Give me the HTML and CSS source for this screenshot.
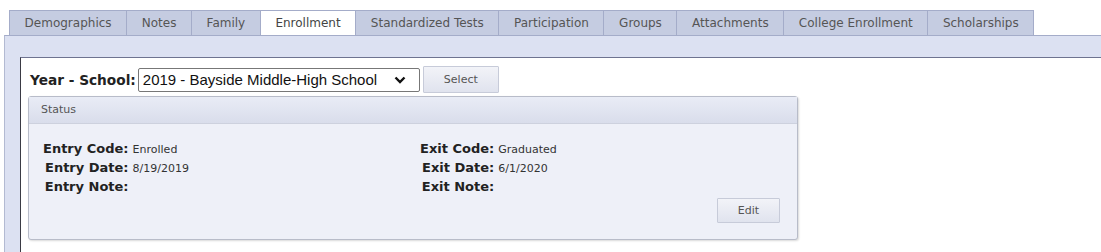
FILE: index.html
```html
<!DOCTYPE html>
<html>
<head>
    <meta charset="UTF-8">
    <meta name="viewport" content="width=device-width, initial-scale=1.0">
    <title>Enrollment</title>
    <link rel="stylesheet" href="styles.css">
</head>
<body>
    <ul class="tabs">
        <li>Demographics</li>
        <li>Notes</li>
        <li>Family</li>
        <li class="active">Enrollment</li>
        <li>Standardized Tests</li>
        <li>Participation</li>
        <li>Groups</li>
        <li>Attachments</li>
        <li>College Enrollment</li>
        <li>Scholarships</li>
    </ul>

    <div class="frame">
        <div class="content">
            <div class="school-row">
                <label for="school">Year - School:</label>
                <span class="select-wrap">
                    <select id="school">
                        <option>2019 - Bayside Middle-High School</option>
                    </select>
                    <svg class="chevron" width="12" height="8" viewBox="0 0 12 8">
                        <path d="M1.5 1.5 L6 6 L10.5 1.5" fill="none" stroke="#111" stroke-width="2.4"/>
                    </svg>
                </span>
                <button class="btn btn-select">Select</button>
            </div>

            <div class="panel">
                <div class="panel-head">Status</div>
                <div class="panel-body">
                    <div class="columns">
                        <div class="fields entry">
                            <span class="lbl">Entry Code:</span><span class="val">Enrolled</span>
                            <span class="lbl">Entry Date:</span><span class="val">8/19/2019</span>
                            <span class="lbl">Entry Note:</span><span class="val"></span>
                        </div>
                        <div class="fields">
                            <span class="lbl">Exit Code:</span><span class="val">Graduated</span>
                            <span class="lbl">Exit Date:</span><span class="val">6/1/2020</span>
                            <span class="lbl">Exit Note:</span><span class="val"></span>
                        </div>
                    </div>
                    <div class="panel-foot">
                        <button class="btn btn-edit">Edit</button>
                    </div>
                </div>
            </div>
        </div>
    </div>
</body>
</html>
```

FILE: styles.css
```css
html, body {
    height: 100%;
}
body {
    margin: 0;
    background: #fff;
    font-family: Verdana, "DejaVu Sans", sans-serif;
    color: #333;
    display: flex;
    flex-direction: column;
    overflow: hidden;
}
.tabs {
    list-style: none;
    margin: 0;
    padding: 10px 0 0 9px;
    display: flex;
}
.tabs li {
    height: 24px;
    line-height: 25px;
    padding: 0 14.6px;
    font-size: 12px;
    color: #555;
    background: #c5cce1;
    border: 1px solid #a4acc9;
    border-bottom: none;
    border-left: none;
}
.tabs li:first-child {
    border-left: 1px solid #a4acc9;
}
.tabs li.active {
    background: #fff;
    color: #444;
}
.frame {
    flex: 1;
    margin-left: 4px;
    background: #dce1f2;
    border-top: 1px solid #a4acc9;
    border-left: 1px solid #b3bad2;
    padding: 21px 0 0 15px;
    display: flex;
}
.content {
    flex: 1;
    background: #fff;
    border-top: 1px solid #6e7390;
    border-left: 1px solid #3a3a44;
    padding: 8px 0 0 7px;
}
.school-row {
    display: flex;
    align-items: center;
    height: 27px;
}
.school-row label {
    margin-left: 2px;
    font-size: 13.7px;
    font-weight: bold;
    color: #222;
}
.select-wrap {
    position: relative;
    margin-left: 2px;
    display: flex;
}
.select-wrap select {
    appearance: none;
    -webkit-appearance: none;
    width: 282px;
    height: 24px;
    padding: 0 0 0 4px;
    font-family: "Liberation Sans", Arial, sans-serif;
    font-size: 15px;
    color: #111;
    background: #fff;
    border: 1px solid #777;
    border-radius: 2px;
}
.chevron {
    position: absolute;
    right: 14px;
    top: 8px;
    pointer-events: none;
}
.btn {
    font-family: Verdana, "DejaVu Sans", sans-serif;
    font-size: 11px;
    color: #555;
    background: linear-gradient(#f2f3f8, #e0e3ee);
    border: 1px solid #c7cbd9;
    border-radius: 1px;
    padding: 0;
}
.btn-select {
    margin-left: 3px;
    width: 76px;
    height: 27px;
}
.panel {
    margin-top: 3px;
    width: 768px;
    border: 1px solid #b8bcc9;
    border-radius: 3px;
    box-shadow: 1px 1px 2px rgba(0,0,0,0.15);
    background: #eef0f8;
}
.panel-head {
    height: 26px;
    line-height: 25px;
    padding-left: 12px;
    font-size: 11px;
    color: #555;
    background: linear-gradient(#e9ecf6, #d9ddeb);
    border-bottom: 1px solid #cdd1de;
}
.panel-body {
    padding: 15px 17px 16px 14px;
}
.columns {
    display: flex;
}
.fields {
    display: grid;
    grid-template-columns: auto auto;
    column-gap: 4px;
    align-items: baseline;
    justify-content: start;
}
.fields.entry {
    width: 377px;
}
.lbl {
    text-align: right;
    font-size: 13px;
    font-weight: bold;
    color: #222;
    line-height: 19px;
}
.val {
    font-size: 11px;
    color: #333;
}
.panel-foot {
    display: flex;
    justify-content: flex-end;
    margin-top: 2px;
}
.btn-edit {
    width: 63px;
    height: 25px;
}
```
